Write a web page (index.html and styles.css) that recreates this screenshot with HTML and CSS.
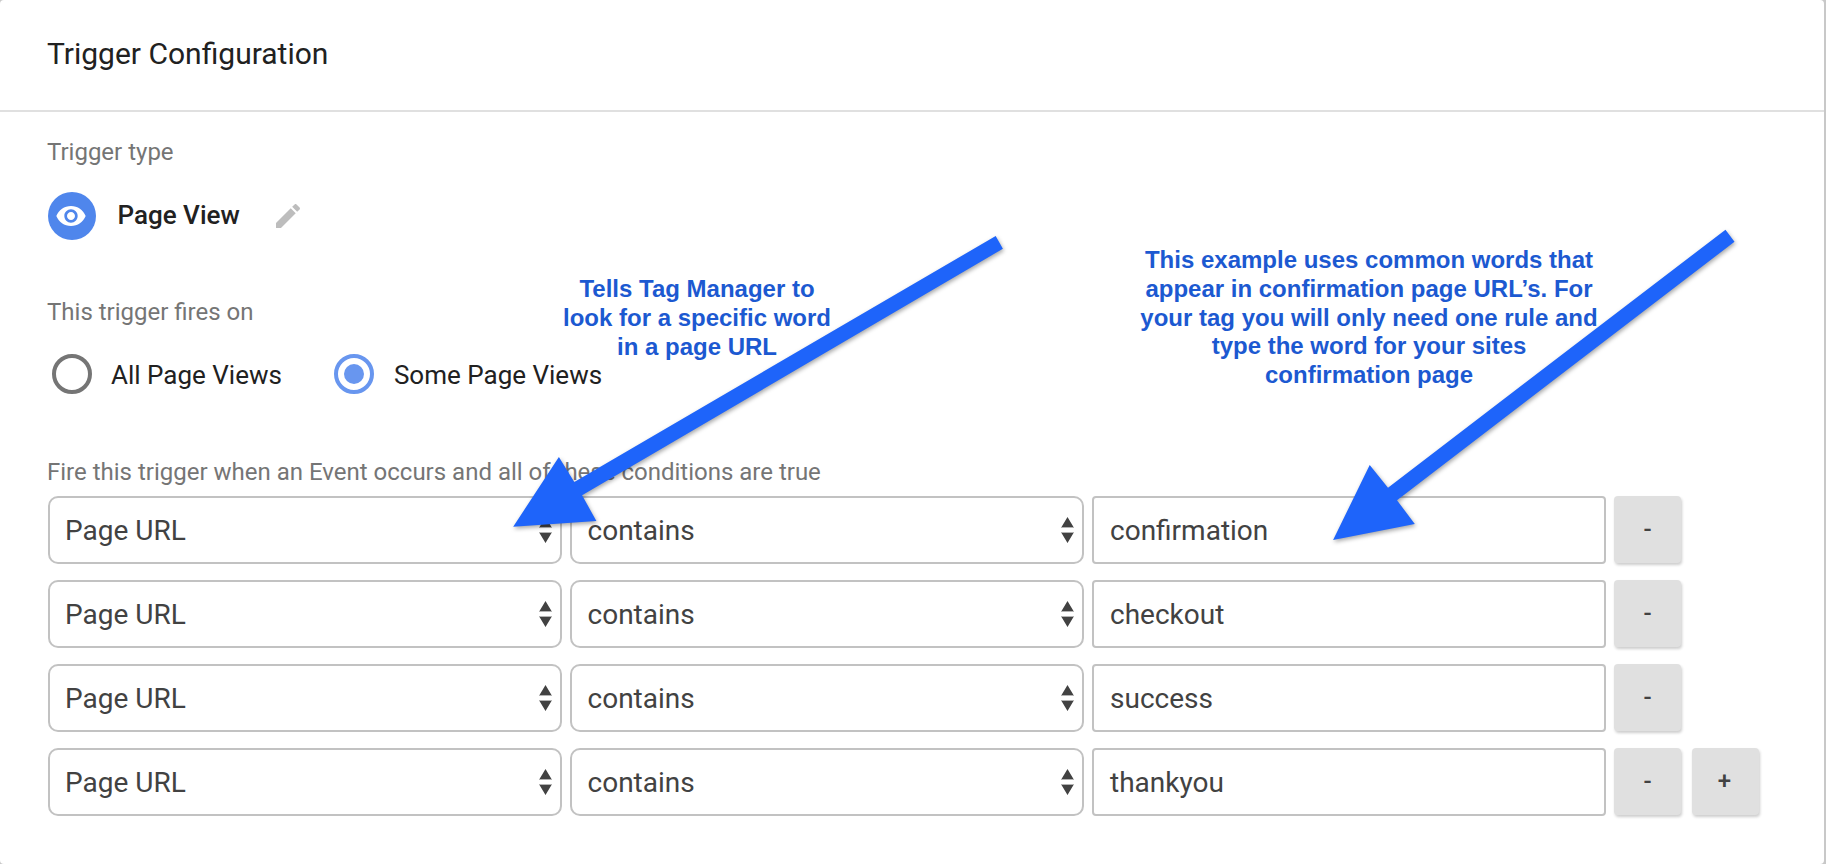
FILE: index.html
```html
<!DOCTYPE html>
<html lang="en">
<head>
<meta charset="utf-8">
<title>Trigger Configuration</title>
<link rel="stylesheet" href="styles.css">
</head>
<body>
<svg class="defs" width="0" height="0">
  <symbol id="sort" viewBox="0 0 13 26"><path d="M6.500 0l6 10H.5zM6.500 26l6-10H.5z"/><path d="M0 10h13v1H0zM0 15h13v1H0z" opacity=".4"/></symbol>
</svg>
<main class="card">
  <header class="card-header"><h1 class="title">Trigger Configuration</h1></header>
  <section class="card-body">
    <div class="label">Trigger type</div>
    <div class="type-row">
      <span class="type-icon"><svg width="32" height="32" viewBox="0 0 24 24"><path d="M12 4.5C7 4.5 2.73 7.61 1 12c1.73 4.39 6 7.5 11 7.5s9.270-3.110 11-7.500c-1.730-4.390-6-7.500-11-7.500zM12 17c-2.760 0-5-2.240-5-5s2.240-5 5-5 5 2.240 5 5-2.240 5-5 5zm0-8c-1.660 0-3 1.340-3 3s1.340 3 3 3 3-1.340 3-3-1.340-3-3-3z"/></svg></span>
      <span class="type-name">Page View</span>
      <svg class="edit" width="32" height="32" viewBox="0 0 24 24"><path d="M3 17.250V21h3.750L17.810 9.940l-3.750-3.750L3 17.250zM20.710 7.040c.39-.39.39-1.020 0-1.410l-2.340-2.340c-.39-.39-1.020-.39-1.410 0l-1.830 1.830 3.750 3.750 1.830-1.830z"/></svg>
    </div>
    <div class="label label-fires">This trigger fires on</div>
    <div class="radios">
      <span class="radio"></span><span class="radio-text">All Page Views</span>
      <span class="radio radio-on"></span><span class="radio-text radio-text-on">Some Page Views</span>
    </div>
    <div class="label label-conditions">Fire this trigger when an Event occurs and all of these conditions are true</div>
    <div class="rows">
      <div class="row">
        <div class="field select">Page URL<svg class="sort"><use href="#sort"/></svg></div>
        <div class="field select operator">contains<svg class="sort"><use href="#sort"/></svg></div>
        <div class="field">confirmation</div>
        <div class="button">-</div>
      </div>
      <div class="row">
        <div class="field select">Page URL<svg class="sort"><use href="#sort"/></svg></div>
        <div class="field select operator">contains<svg class="sort"><use href="#sort"/></svg></div>
        <div class="field">checkout</div>
        <div class="button">-</div>
      </div>
      <div class="row">
        <div class="field select">Page URL<svg class="sort"><use href="#sort"/></svg></div>
        <div class="field select operator">contains<svg class="sort"><use href="#sort"/></svg></div>
        <div class="field">success</div>
        <div class="button">-</div>
      </div>
      <div class="row">
        <div class="field select">Page URL<svg class="sort"><use href="#sort"/></svg></div>
        <div class="field select operator">contains<svg class="sort"><use href="#sort"/></svg></div>
        <div class="field">thankyou</div>
        <div class="button">-</div>
        <div class="button button-add">+</div>
      </div>
    </div>
  </section>
  <p class="note note-word">Tells Tag Manager to<br>look for a specific word<br>in a page URL</p>
  <p class="note note-example">This example uses common words that<br>appear in confirmation page URL’s. For<br>your tag you will only need one rule and<br>type the word for your sites<br>confirmation page</p>
  <svg class="arrows" width="1826" height="864" viewBox="0 0 1826 864">
    <path d="M995.700 236L1002.900 248.700 582.100 495.300 596.400 521 513.200 526.700 558.900 457 574.300 482z"/>
    <path d="M1725.500 229.700L1734.500 241.700 1397 500.300 1414.800 524 1333.100 540 1369.700 465 1388 487.700z"/>
  </svg>
</main>
</body>
</html>
```
FILE: styles.css
```css
* { box-sizing: border-box; }
body {
  margin: 0;
  background: #c8c8c8;
  font-family: Roboto, sans-serif;
  color: #212121;
  overflow: hidden;
}
.defs { position: absolute; }
.card {
  position: relative;
  width: 1824px;
  height: 864px;
  background: #fff;
  border-radius: 4px;
}
.card-header {
  height: 112px;
  padding: 36px 47px 0;
  border-bottom: 2px solid #e0e0e0;
}
.title {
  margin: 0;
  font-size: 30px;
  line-height: 36px;
  font-weight: 400;
}
.card-body { padding: 26px 0 0 48px; }
.label {
  margin-left: -1px;
  font-size: 24px;
  line-height: 28px;
  color: #757575;
}
.type-row {
  display: flex;
  align-items: center;
  height: 48px;
  margin-top: 26px;
}
.type-icon {
  display: flex;
  align-items: center;
  justify-content: center;
  width: 48px;
  height: 48px;
  padding-right: 2px;
  border-radius: 50%;
  background: #4f86ec;
}
.type-icon svg { fill: #fff; }
.type-name {
  margin-left: 21.5px;
  padding-bottom: 2px;
  font-size: 26px;
  line-height: 30px;
  font-weight: 500;
}
.edit { margin-left: 32.5px; fill: #bdbdbd; }
.label-fires { margin-top: 58px; }
.radios {
  display: flex;
  align-items: center;
  height: 40px;
  margin-top: 28px;
  padding-left: 4px;
}
.radio {
  display: flex;
  align-items: center;
  justify-content: center;
  width: 40px;
  height: 40px;
  border: 4px solid #757575;
  border-radius: 50%;
}
.radio-on { margin-left: 52px; border-color: #6896ef; }
.radio-on::before {
  content: "";
  width: 20px;
  height: 20px;
  border-radius: 50%;
  background: #6896ef;
}
.radio-text {
  margin-left: 19px;
  padding-top: 2px;
  font-size: 26px;
  line-height: 30px;
}
.radio-text-on { margin-left: 20px; }
.label-conditions { margin-top: 64px; }
.rows {
  display: flex;
  flex-direction: column;
  gap: 16px;
  margin-top: 10px;
}
.row { display: flex; gap: 8px; }
.field {
  display: flex;
  align-items: center;
  justify-content: space-between;
  width: 514px;
  height: 68px;
  padding: 2px 8px 0 16px;
  border: 2px solid #c2c2c2;
  border-radius: 4px;
  font-size: 28px;
  line-height: 32px;
  color: #424242;
}
.select { padding-left: 15px; border-radius: 10px; }
.operator { padding-left: 15.5px; }
.sort { width: 13px; height: 26px; margin-bottom: 2px; fill: #424242; }
.button {
  width: 67px;
  height: 67px;
  border-radius: 4px;
  background: #e0e0e0;
  box-shadow: 1px 2px 3px rgba(0, 0, 0, .2);
  font-size: 24px;
  line-height: 66px;
  font-weight: 500;
  text-align: center;
  color: #424242;
}
.button-add { margin-left: 3px; padding-right: 2px; }
.note {
  position: absolute;
  margin: 0;
  font: bold 24px/28.8px "Liberation Sans", Arial, sans-serif;
  text-align: center;
  white-space: nowrap;
  color: #1c59d1;
  transform: translateX(-50%);
}
.note-word { left: 697px; top: 275px; }
.note-example { left: 1369px; top: 246px; }
.arrows {
  position: absolute;
  left: 0;
  top: 0;
  fill: #1e64fa;
  filter: drop-shadow(1px 2px 2px rgba(0, 0, 0, .35));
}
```
